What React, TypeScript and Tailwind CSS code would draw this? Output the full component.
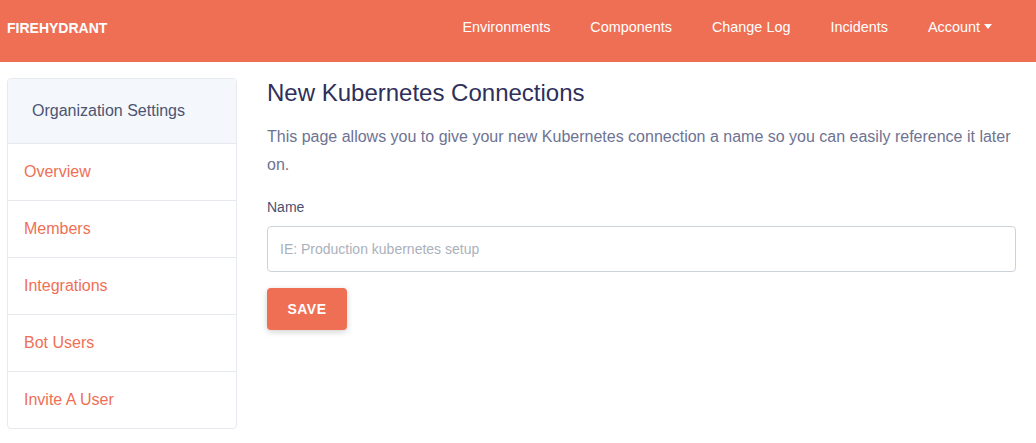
const links = ["Environments", "Components", "Change Log", "Incidents"];
const menu = ["Overview", "Members", "Integrations", "Bot Users", "Invite A User"];

export default function App() {
  return (
    <div className="min-h-[443px] bg-white font-['Liberation_Sans',Arial,sans-serif]">
      <nav className="flex h-[62px] items-center bg-[#ef6f55] pb-[6px] pl-[7px] pr-[24px] text-white">
        <span className="text-[14px] font-bold">FIREHYDRANT</span>
        <div className="ml-auto flex items-center text-[14.4px]">
          {links.map((l) => (
            <a key={l} className="px-[20px]">
              {l}
            </a>
          ))}
          <a className="flex items-center px-[20px]">
            Account
            <span className="ml-[4px] mt-[-2px] h-0 w-0 border-x-[4px] border-t-[5px] border-x-transparent border-t-white" />
          </a>
        </div>
      </nav>

      <div className="flex items-start">
        <aside className="ml-[7px] mt-[16px] w-[230px] overflow-hidden rounded-[4px] border border-[#e6e9ee]">
          <div className="flex h-[65px] items-center border-b border-[#e6e9ee] bg-[#f4f7fb] pl-[24px] text-[16px] text-[#4b5573]">
            Organization Settings
          </div>
          {menu.map((m, i) => (
            <div
              key={m}
              className={
                i < menu.length - 1
                  ? "flex h-[57px] items-center border-b border-[#e6e9ee] pl-[16px] text-[16px] text-[#ef6f55]"
                  : "flex h-[56px] items-center pl-[16px] text-[16px] text-[#ef6f55]"
              }
            >
              {m}
            </div>
          ))}
        </aside>

        <main className="ml-[30px] mr-[20px] mt-[15px] flex-1">
          <h1 className="text-[24px] leading-[32px] text-[#2e2f5a]">New Kubernetes Connections</h1>
          <p className="mt-[14px] text-[16px] leading-[28px] text-[#6e7392]">
            This page allows you to give your new Kubernetes connection a name so you can easily reference it later on.
          </p>
          <label className="mt-[18px] block text-[14px] leading-[20px] text-[#4a5070]">Name</label>
          <input
            className="mt-[9px] block h-[46px] w-full rounded-[4px] border border-[#cdd3da] px-[12px] text-[14px] text-[#4a5070] outline-none placeholder:text-[#abb1bb]"
            placeholder="IE: Production kubernetes setup"
          />
          <button className="mt-[16px] h-[42px] w-[80px] rounded-[4px] bg-[#ef6f55] text-[14px] font-bold tracking-[0.5px] text-white shadow-[0_2px_6px_rgba(0,0,0,0.18)]">
            SAVE
          </button>
        </main>
      </div>
    </div>
  );
}
